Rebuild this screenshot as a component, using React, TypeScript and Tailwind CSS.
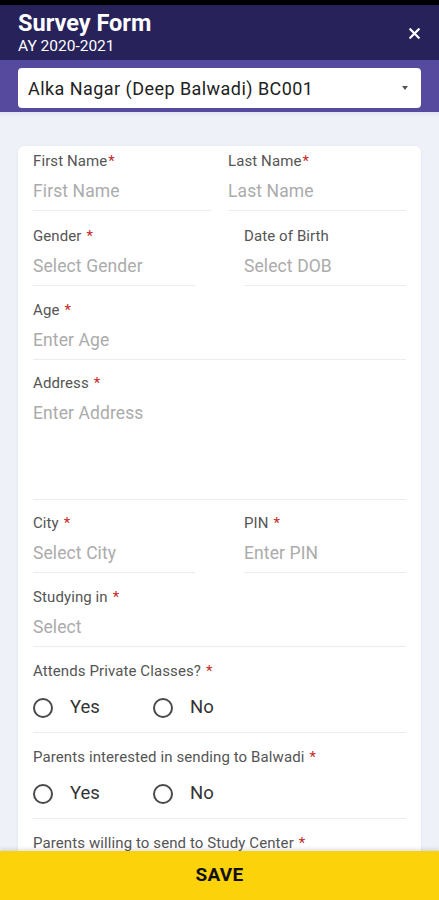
import { X } from "lucide-react"

function Req({ space }: { space?: boolean }) {
  return <span className={`text-[#c62828] ${space ? "ml-[5px]" : "ml-[1px]"}`}>*</span>
}

function Field({
  label,
  placeholder,
  required,
  spaced = true,
  className = "",
  tall,
}: {
  label: string
  placeholder: string
  required?: boolean
  spaced?: boolean
  className?: string
  tall?: boolean
}) {
  return (
    <div className={className}>
      <div className="text-[15px] leading-[20px] text-[#555] tracking-[0.1px]">
        {label}
        {required && <Req space={spaced} />}
      </div>
      <div
        className={`mt-[9px] text-[17.5px] leading-[22px] text-[#ababab] tracking-[0.1px] border-b border-[#ececec] ${
          tall ? "h-[98px]" : "h-[31px]"
        }`}
      >
        {placeholder}
      </div>
    </div>
  )
}

function Radio({ label, className = "" }: { label: string; className?: string }) {
  return (
    <div className={`flex items-center gap-[17px] h-[24px] ${className}`}>
      <span className="w-[20px] h-[20px] rounded-full border-2 border-[#4a4a4a]" />
      <span className="text-[18.5px] text-[#333]">{label}</span>
    </div>
  )
}

function RadioField({ label }: { label: string }) {
  return (
    <div className="border-b border-[#ececec] pb-[12px]">
      <div className="text-[15px] leading-[20px] text-[#555] tracking-[0.1px]">
        {label}
        <Req space />
      </div>
      <div className="mt-[15px] flex">
        <Radio label="Yes" className="w-[120px]" />
        <Radio label="No" />
      </div>
    </div>
  )
}

export default function App() {
  return (
    <div
      className="w-[439px] h-[900px] relative overflow-hidden bg-[#eef2f8]"
      style={{ fontFamily: "Roboto, 'Liberation Sans', sans-serif" }}
    >
      <div className="h-[5px] bg-black" />
      <header className="bg-[#27225a] h-[55px] px-[18px] flex items-center justify-between">
        <div className="text-white">
          <h1 className="text-[23.5px] leading-[25px] font-bold">Survey Form</h1>
          <p className="text-[15.5px] leading-[18px] mt-[1px]">AY 2020-2021</p>
        </div>
        <X size={17} strokeWidth={3.2} className="text-white -mr-[2px] mt-[2px]" />
      </header>
      <div className="bg-[#564a9e] px-[18px] pt-[8px] pb-[4px]">
        <div className="bg-white rounded-[4px] h-[40px] flex items-center justify-between pl-[10px] pr-[13px]">
          <span className="text-[18px] text-[#222] tracking-[0.45px]">Alka Nagar (Deep Balwadi) BC001</span>
          <span className="w-0 h-0 border-l-[3.5px] border-r-[3.5px] border-t-[4px] border-l-transparent border-r-transparent border-t-[#555]" />
        </div>
      </div>
      <div className="bg-gradient-to-b from-[#e4e4f2] to-[#eef2f8] h-[6px]" />

      <div className="mx-[18px] mt-[28px] bg-white rounded-[6px] shadow-[0_0_3px_rgba(0,0,0,0.06)] px-[15px] pt-[5px]">
        <div className="grid grid-cols-2 gap-x-[17px]">
          <Field label="First Name" placeholder="First Name" required spaced={false} />
          <Field label="Last Name" placeholder="Last Name" required spaced={false} />
        </div>
        <div className="mt-[15px] grid grid-cols-2 gap-x-[49px]">
          <Field label="Gender" placeholder="Select Gender" required />
          <Field label="Date of Birth" placeholder="Select DOB" />
        </div>
        <Field className="mt-[14px]" label="Age" placeholder="Enter Age" required />
        <Field className="mt-[13px]" label="Address" placeholder="Enter Address" required tall />
        <div className="mt-[13px] grid grid-cols-2 gap-x-[49px]">
          <Field label="City" placeholder="Select City" required />
          <Field label="PIN" placeholder="Enter PIN" required />
        </div>
        <Field className="mt-[14px]" label="Studying in" placeholder="Select" required />
        <div className="mt-[14px]">
          <RadioField label="Attends Private Classes?" />
        </div>
        <div className="mt-[14px]">
          <RadioField label="Parents interested in sending to Balwadi" />
        </div>
        <div className="mt-[14px] text-[15px] leading-[20px] text-[#555] tracking-[0.1px]">
          Parents willing to send to Study Center
          <Req space />
        </div>
        <div className="h-[80px]" />
      </div>

      <button className="absolute left-0 bottom-0 w-full h-[49px] bg-[#fcd20b] text-[19px] font-bold text-[#111] tracking-[0.3px] shadow-[0_-2px_4px_rgba(0,0,0,0.12)]">
        SAVE
      </button>
    </div>
  )
}
